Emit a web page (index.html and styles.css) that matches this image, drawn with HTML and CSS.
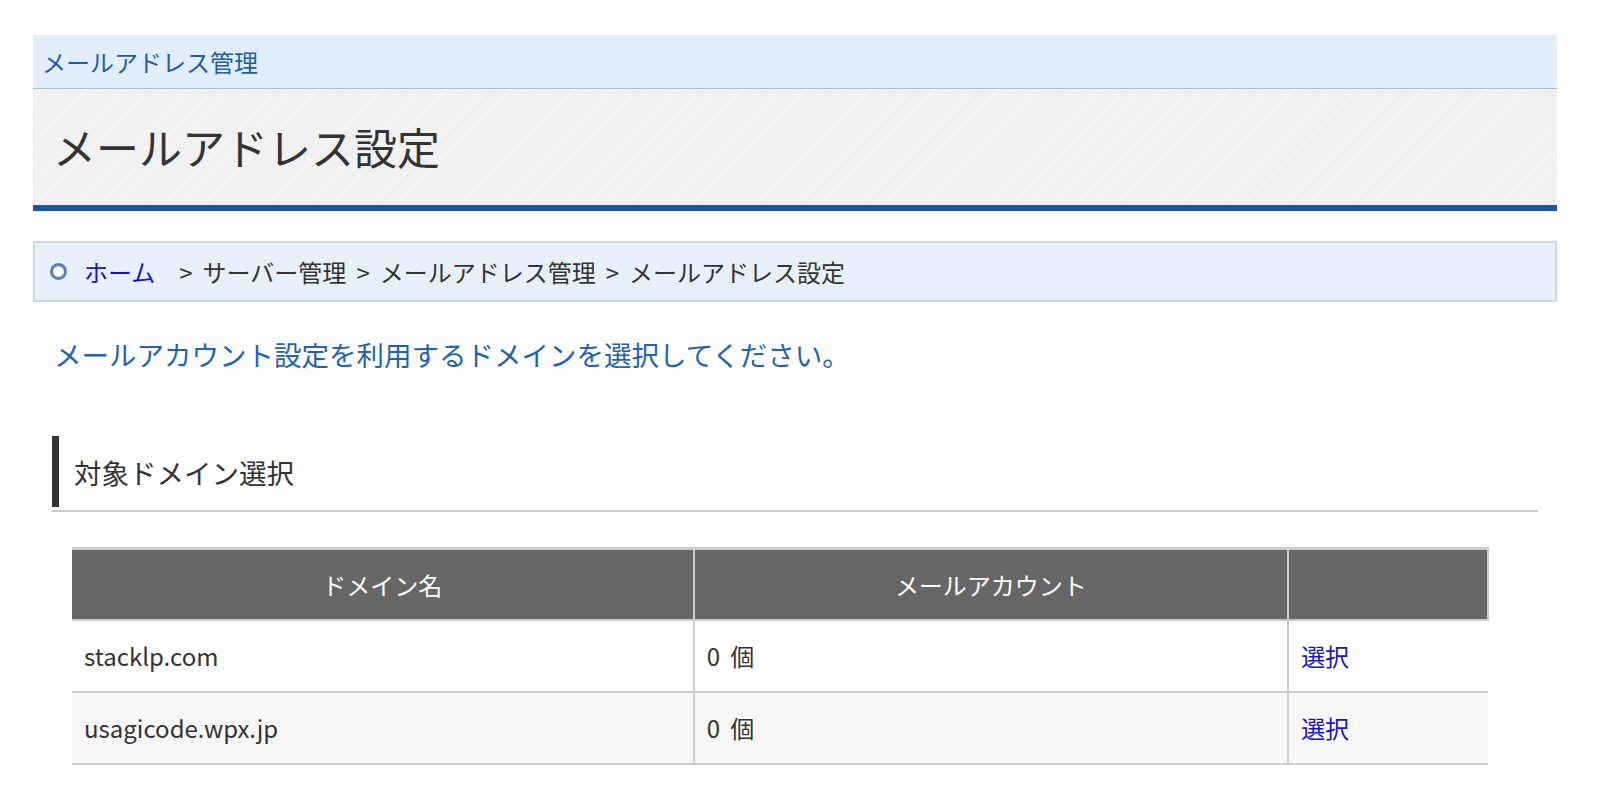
FILE: index.html
```html
<!DOCTYPE html>
<html lang="ja">
<head>
<meta charset="utf-8">
<title>メールアドレス設定</title>
<link rel="stylesheet" href="styles.css">
</head>
<body>
<div class="page">
  <div class="topbar">メールアドレス管理</div>
  <div class="titlebar"><h1 class="title">メールアドレス設定</h1></div>
  <div class="breadcrumb">
    <span class="bullet"></span>
    <a class="home" href="#">ホーム</a>
    <span class="sep sep-first">&gt;</span><span>サーバー管理</span>
    <span class="sep">&gt;</span><span>メールアドレス管理</span>
    <span class="sep">&gt;</span><span>メールアドレス設定</span>
  </div>
  <div class="content">
    <p class="message">メールアカウント設定を利用するドメインを選択してください。</p>
    <div class="section">
      <h2 class="section-title">対象ドメイン選択</h2>
    </div>
    <table class="domains">
      <thead>
        <tr>
          <th class="col-name">ドメイン名</th>
          <th class="col-count">メールアカウント</th>
          <th class="col-action"></th>
        </tr>
      </thead>
      <tbody>
        <tr>
          <td>stacklp.com</td>
          <td class="count">0 個</td>
          <td><a class="select" href="#">選択</a></td>
        </tr>
        <tr class="alt">
          <td>usagicode.wpx.jp</td>
          <td class="count">0 個</td>
          <td><a class="select" href="#">選択</a></td>
        </tr>
      </tbody>
    </table>
  </div>
</div>
</body>
</html>
```
FILE: styles.css
```css
* { box-sizing: border-box; }
html, body { margin: 0; padding: 0; background: #fff; }
body {
  font-family: "Noto Sans CJK JP", "Noto Sans", "Liberation Sans", sans-serif;
  color: #333;
}
.page {
  padding: 35px 43px 0 33px;
}
.topbar {
  height: 54px;
  background: #e2eefc;
  border-bottom: 1px solid #a6bdd8;
  display: flex;
  align-items: center;
  padding-left: 9px;
  font-size: 24px;
  color: #1f5ea6;
}
.titlebar {
  height: 122px;
  background-color: #f1f1f1;
  background-image: repeating-linear-gradient(135deg, #f1f1f1 0 7px, #f4f4f4 7px 9px, #f0f0f0 9px 15px);
  border-bottom: 6px solid #1a55a6;
  display: flex;
  align-items: center;
  padding-left: 20px;
}
.title {
  margin: 0;
  font-size: 43px;
  font-weight: normal;
  color: #333;
  line-height: 1.2;
}
.breadcrumb {
  margin-top: 30px;
  height: 61px;
  background: #e6f1fc;
  border: 2px solid #c9d9e6;
  display: flex;
  align-items: center;
  padding-left: 15px;
  font-size: 24px;
  color: #333;
}
.bullet {
  width: 17px;
  height: 17px;
  border-radius: 50%;
  border: 3px solid #5a80ba;
  background: #fff;
  box-shadow: inset 0 0 2px #9fb8dc;
  margin-right: 17px;
  flex: none;
}
.home {
  color: #1414c8;
  text-decoration: none;
}
.sep {
  margin: 0 10px;
}
.sep-first {
  margin-left: 24px;
}
.content {
  padding: 0 19px;
}
.message {
  margin: 33px 0 0 0;
  padding-left: 2px;
  font-size: 27.5px;
  line-height: 38px;
  color: #1e64b2;
}
.section {
  margin-top: 63px;
  border-bottom: 2px solid #cccccc;
  padding-bottom: 3px;
}
.section-title {
  margin: 0;
  height: 71px;
  border-left: 7px solid #333;
  padding-left: 15px;
  display: flex;
  align-items: center;
  font-size: 27.5px;
  font-weight: normal;
  color: #333;
}
.domains {
  margin: 35px 0 0 20px;
  width: 1417px;
  border-collapse: collapse;
  font-size: 24px;
  color: #333;
}
.domains th {
  height: 71px;
  background: #666;
  color: #fff;
  font-weight: normal;
  text-align: center;
  border-top: 3px solid #cccccc;
  border-bottom: 2px solid #cccccc;
  padding: 0;
}
.domains th + th {
  border-left: 2px solid #cccccc;
}
.domains th.col-action {
  border-right: 2px solid #cccccc;
}
.col-name { width: 622px; }
.col-count { width: 595px; }
.col-action { width: 200px; }
.domains td {
  height: 72px;
  padding: 0 0 0 12px;
  border-bottom: 2px solid #cccccc;
  text-align: left;
  vertical-align: middle;
}
.domains td + td {
  border-left: 2px solid #cccccc;
}
.domains td.count {
  word-spacing: 5px;
}
.domains tr.alt td {
  background: #f7f7f7;
}
.select {
  color: #1414c8;
  text-decoration: none;
}
```
